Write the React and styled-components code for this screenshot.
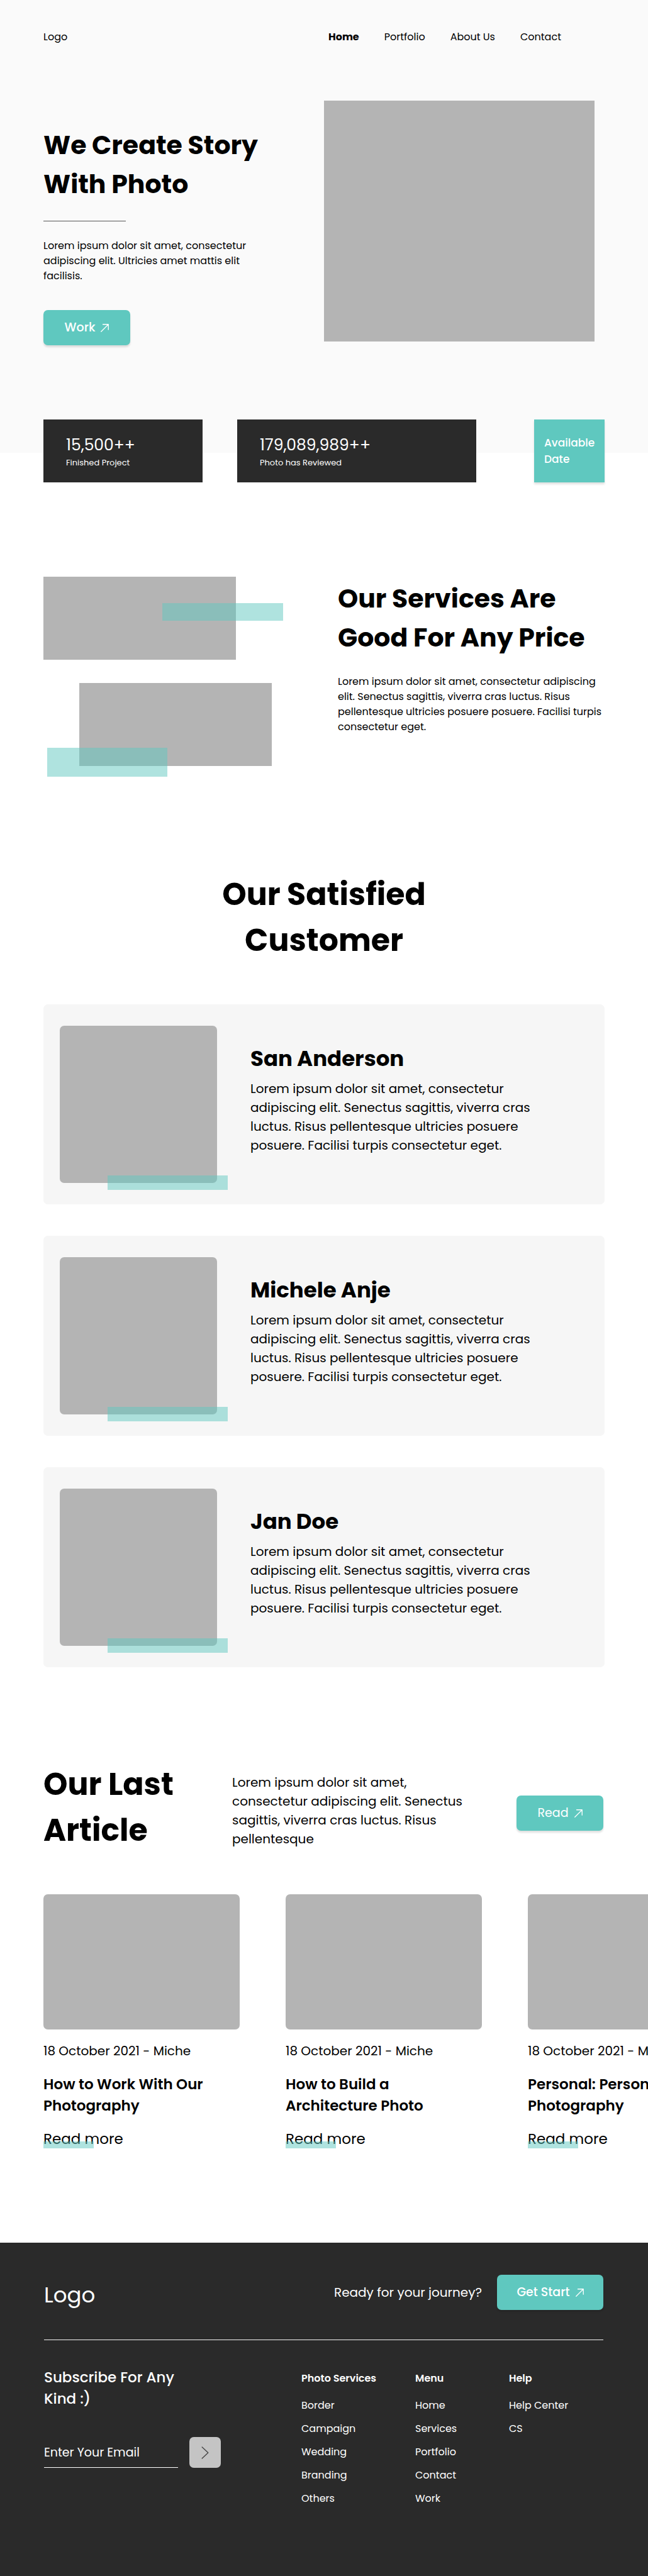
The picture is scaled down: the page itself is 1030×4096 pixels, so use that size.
import React from "react";
import styled, { createGlobalStyle } from "styled-components";

const teal = "#5fc8bf";
const tealVeil = "rgba(95, 200, 191, 0.5)";
const ink = "#2a2a2a";
const placeholder = "#b4b4b4";

const GlobalStyle = createGlobalStyle`
  *, *::before, *::after { box-sizing: border-box; }
  body {
    margin: 0;
    background: #fff;
    color: #000;
    font-family: Poppins, Inter, "Open Sans", sans-serif;
    font-size: 16px;
    line-height: 24px;
  }
  h1, h2, h3, p, ul, figure { margin: 0; padding: 0; }
  ul { list-style: none; }
  a { color: inherit; text-decoration: none; }
  button, input { font: inherit; color: inherit; }
`;

/* Shared pieces */

const Section = styled.section`
  padding: 0 69px;
  margin-top: ${(p) => p.$gap}px;
`;

const Title = styled.h2`
  font-size: 41px;
  line-height: 62px;
  font-weight: 700;
`;

const BigTitle = styled.h2`
  font-size: 49px;
  line-height: 73px;
  font-weight: 700;
  text-align: ${(p) => (p.$center ? "center" : "left")};
`;

const Copy = styled.p`
  max-width: ${(p) => (p.$width ? `${p.$width}px` : "none")};
  font-size: ${(p) => (p.$large ? 20 : 16)}px;
  line-height: ${(p) => (p.$large ? 30 : 24)}px;
`;

const Action = styled.button`
  display: inline-flex;
  align-items: center;
  justify-content: center;
  gap: 9px;
  min-width: ${(p) => (p.$wide ? 169 : 138)}px;
  height: 56px;
  padding: 0 30px;
  border: 0;
  border-radius: 7px;
  background: ${teal};
  box-shadow: 0 3px 3px rgba(0, 0, 0, 0.12);
  color: #fff;
  font-size: 19px;
  font-weight: ${(p) => p.$weight || 500};
  white-space: nowrap;
  cursor: pointer;
`;

const Veil = styled.span`
  position: absolute;
  background: ${tealVeil};
`;

function ArrowIcon() {
  return (
    <svg width="13" height="13" viewBox="0 0 17 17" fill="none" stroke="#fff" strokeWidth="1.7" strokeLinecap="round" strokeLinejoin="round" aria-hidden="true">
      <path d="M1 16L16 1M4.6 1H16V12" />
    </svg>
  );
}

/* Header and hero */

const Top = styled.div`
  padding: 47px 69px 171px;
  background: #fafafa;
`;

const Header = styled.header`
  display: grid;
  grid-template-columns: 1fr 1fr;
`;

const Nav = styled.nav`
  display: flex;
  gap: 40px;
  padding-left: 7px;
`;

const NavLink = styled.a`
  font-weight: ${(p) => (p.$active ? 700 : 400)};
`;

const Hero = styled.section`
  display: grid;
  grid-template-columns: 1fr 1fr;
  margin-top: 89px;
`;

const HeroText = styled.div`
  padding-top: 40px;
`;

const Rule = styled.hr`
  width: 131px;
  height: 1px;
  margin: 27px 0;
  border: 0;
  background: #555;
`;

const HeroAction = styled.div`
  margin-top: 42px;
`;

const HeroImage = styled.figure`
  width: 100%;
  max-width: 430px;
  height: 383px;
  background: ${placeholder};
`;

/* Figures strip */

const Stats = styled.section`
  display: grid;
  grid-template-columns: 253fr 380fr 149fr;
  gap: 55px;
  margin-top: -53px;
  padding: 0 69px;
`;

const Stat = styled.div`
  display: flex;
  flex-direction: column;
  height: 100px;
  padding: 23px 0 0 36px;
  background: ${ink};
  color: #fff;
`;

const StatValue = styled.strong`
  font-size: 25px;
  line-height: 36px;
  font-weight: 400;
`;

const StatLabel = styled.span`
  font-size: 13px;
  line-height: 20px;
`;

const Available = styled.button`
  justify-self: end;
  width: 112px;
  height: 100px;
  padding: 0 16px;
  border: 0;
  background: ${teal};
  box-shadow: 0 3px 3px rgba(0, 0, 0, 0.12);
  color: #fff;
  font-size: 17px;
  line-height: 26px;
  font-weight: 500;
  text-align: left;
  cursor: pointer;
`;

/* Services */

const ServicesGrid = styled.div`
  display: grid;
  grid-template-columns: 381fr 424fr;
  gap: 87px;
`;

const Frames = styled.div`
  display: flex;
  flex-direction: column;
  gap: 37px;
`;

const Frame = styled.div`
  position: relative;
  width: 306px;
  height: 132px;
  margin-left: ${(p) => (p.$indent ? 57 : 0)}px;
  background: ${placeholder};
`;

const SideVeil = styled(Veil)`
  top: 42px;
  left: 189px;
  width: 192px;
  height: 28px;
`;

const CornerVeil = styled(Veil)`
  top: 103px;
  left: -51px;
  width: 191px;
  height: 46px;
`;

const ServicesText = styled.div`
  display: flex;
  flex-direction: column;
  gap: 27px;
  padding-top: 4px;
`;

/* Testimonials */

const Cards = styled.div`
  display: flex;
  flex-direction: column;
  gap: 50px;
  margin-top: 65px;
`;

const Card = styled.article`
  display: flex;
  gap: 53px;
  padding: 34px 26px;
  border-radius: 7px;
  background: #f6f6f6;
`;

const Portrait = styled.div`
  position: relative;
  flex: none;
  width: 250px;
  height: 250px;
  border-radius: 7px;
  background: ${placeholder};
`;

const PortraitVeil = styled(Veil)`
  top: 238px;
  left: 76px;
  width: 191px;
  height: 23px;
`;

const CardText = styled.div`
  display: flex;
  flex-direction: column;
  gap: 8px;
  padding-top: 27px;
`;

const Name = styled.h3`
  font-size: 34px;
  line-height: 50px;
  font-weight: 700;
`;

/* Articles */

const ArticlesHead = styled.div`
  display: grid;
  grid-template-columns: 300fr 452fr 140fr;
`;

const ArticlesIntro = styled.div`
  padding-top: 18px;
`;

const ArticlesAction = styled.div`
  padding-top: 54px;
`;

const ArticleRow = styled.div`
  display: flex;
  gap: 73px;
  margin: 65px -69px 0 0;
  overflow-x: auto;
  scrollbar-width: none;
`;

const Article = styled.article`
  flex: none;
  width: 312px;
`;

const ArticleImage = styled.div`
  height: 215px;
  border-radius: 7px;
  background: ${placeholder};
`;

const ArticleDate = styled.p`
  margin-top: 19px;
  font-size: 20px;
  line-height: 30px;
  white-space: nowrap;
`;

const ArticleTitle = styled.h3`
  max-width: 270px;
  margin-top: 21px;
  font-size: 23px;
  line-height: 34px;
  font-weight: 600;
`;

const ReadMore = styled.a`
  position: relative;
  display: block;
  width: fit-content;
  margin-top: 18px;
  font-size: 23px;
  line-height: 36px;
`;

const ReadVeil = styled(Veil)`
  bottom: 3px;
  left: 0;
  width: 80px;
  height: 11px;
`;

/* Footer */

const Footer = styled.footer`
  margin-top: 147px;
  padding: 51px 71px 105px 70px;
  background: ${ink};
  color: #fff;
`;

const FooterTop = styled.div`
  display: flex;
  align-items: center;
  gap: 24px;
  padding-bottom: 47px;
  border-bottom: 1px solid #f2f2f2;
`;

const FooterLogo = styled.a`
  align-self: flex-end;
  margin-right: auto;
  font-size: 34px;
  line-height: 48px;
`;

const FooterMain = styled.div`
  display: grid;
  grid-template-columns: 409fr 181fr 149fr 150fr;
`;

const Subscribe = styled.form`
  padding-top: 42px;
`;

const SubscribeTitle = styled.h2`
  max-width: 230px;
  font-size: 23px;
  line-height: 34px;
  font-weight: 500;
`;

const Field = styled.div`
  display: flex;
  gap: 18px;
  margin-top: 44px;
`;

const Email = styled.input`
  width: 213px;
  height: 49px;
  padding: 0;
  border: 0;
  border-bottom: 1px solid #fff;
  border-radius: 0;
  outline: 0;
  background: transparent;
  font-size: 19px;

  &::placeholder { color: #fff; opacity: 1; }
`;

const Send = styled.button`
  display: grid;
  place-items: center;
  width: 50px;
  height: 49px;
  padding: 0;
  border: 0;
  border-radius: 7px;
  background: #c4c4c4;
  cursor: pointer;
`;

const LinkColumn = styled.div`
  padding-top: 49px;
`;

const ColumnTitle = styled.h3`
  margin-bottom: 12px;
  font-size: 16px;
  line-height: 24px;
  font-weight: 600;
`;

const LinkItem = styled.li`
  font-size: 16px;
  line-height: 37px;
`;

const nav = ["Home", "Portfolio", "About Us", "Contact"];
const customers = ["San Anderson", "Michele Anje", "Jan Doe"];
const articles = [
  ["How to Work With Our", "Photography"],
  ["How to Build a", "Architecture Photo"],
  ["Personal: Personal", "Photography"],
];
const columns = [
  ["Photo Services", ["Border", "Campaign", "Wedding", "Branding", "Others"]],
  ["Menu", ["Home", "Services", "Portfolio", "Contact", "Work"]],
  ["Help", ["Help Center", "CS"]],
];

export default function App() {
  return (
    <>
      <GlobalStyle />
      <Top>
        <Header>
          <a href="#home">Logo</a>
          <Nav>
            {nav.map((item, i) => (
              <NavLink key={item} href="#home" $active={i === 0}>{item}</NavLink>
            ))}
          </Nav>
        </Header>
        <Hero>
          <HeroText>
            <Title as="h1">We Create Story<br />With Photo</Title>
            <Rule />
            <Copy $width={340}>
              Lorem ipsum dolor sit amet, consectetur adipiscing elit. Ultricies amet mattis elit facilisis.
            </Copy>
            <HeroAction>
              <Action type="button">Work <ArrowIcon /></Action>
            </HeroAction>
          </HeroText>
          <HeroImage />
        </Hero>
      </Top>

      <Stats>
        <Stat>
          <StatValue>15,500++</StatValue>
          <StatLabel>Finished Project</StatLabel>
        </Stat>
        <Stat>
          <StatValue>179,089,989++</StatValue>
          <StatLabel>Photo has Reviewed</StatLabel>
        </Stat>
        <Available type="button">Available Date</Available>
      </Stats>

      <Section $gap={150}>
        <ServicesGrid>
          <Frames>
            <Frame><SideVeil /></Frame>
            <Frame $indent><CornerVeil /></Frame>
          </Frames>
          <ServicesText>
            <Title>Our Services Are<br />Good For Any Price</Title>
            <Copy>
              Lorem ipsum dolor sit amet, consectetur adipiscing elit. Senectus sagittis, viverra cras luctus. Risus pellentesque ultricies posuere posuere. Facilisi turpis consectetur eget.
            </Copy>
          </ServicesText>
        </ServicesGrid>
      </Section>

      <Section $gap={168}>
        <BigTitle $center>Our Satisfied<br />Customer</BigTitle>
        <Cards>
          {customers.map((name) => (
            <Card key={name}>
              <Portrait><PortraitVeil /></Portrait>
              <CardText>
                <Name>{name}</Name>
                <Copy $large $width={460}>
                  Lorem ipsum dolor sit amet, consectetur adipiscing elit. Senectus sagittis, viverra cras luctus. Risus pellentesque ultricies posuere posuere. Facilisi turpis consectetur eget.
                </Copy>
              </CardText>
            </Card>
          ))}
        </Cards>
      </Section>

      <Section $gap={150}>
        <ArticlesHead>
          <BigTitle>Our Last<br />Article</BigTitle>
          <ArticlesIntro>
            <Copy $large $width={380}>
              Lorem ipsum dolor sit amet, consectetur adipiscing elit. Senectus sagittis, viverra cras luctus. Risus pellentesque
            </Copy>
          </ArticlesIntro>
          <ArticlesAction>
            <Action type="button" $weight={400}>Read <ArrowIcon /></Action>
          </ArticlesAction>
        </ArticlesHead>
        <ArticleRow>
          {articles.map(([first, second]) => (
            <Article key={first}>
              <ArticleImage />
              <ArticleDate>18 October 2021 - Miche</ArticleDate>
              <ArticleTitle>{first}<br />{second}</ArticleTitle>
              <ReadMore href="#article">Read more<ReadVeil /></ReadMore>
            </Article>
          ))}
        </ArticleRow>
      </Section>

      <Footer>
        <FooterTop>
          <FooterLogo href="#home">Logo</FooterLogo>
          <Copy $large>Ready for your journey?</Copy>
          <Action type="button" $wide>Get Start <ArrowIcon /></Action>
        </FooterTop>
        <FooterMain>
          <Subscribe onSubmit={(e) => e.preventDefault()}>
            <SubscribeTitle>Subscribe For Any Kind :)</SubscribeTitle>
            <Field>
              <Email type="email" placeholder="Enter Your Email" aria-label="Enter Your Email" />
              <Send type="submit" aria-label="Subscribe">
                <svg width="12" height="20" viewBox="0 0 12 20" fill="none" stroke="#444" strokeWidth="1.4" strokeLinecap="round" strokeLinejoin="round" aria-hidden="true">
                  <path d="M1.2 1L10.8 10L1.2 19" />
                </svg>
              </Send>
            </Field>
          </Subscribe>
          {columns.map(([title, links]) => (
            <LinkColumn key={title}>
              <ColumnTitle>{title}</ColumnTitle>
              <ul>
                {links.map((link) => (
                  <LinkItem key={link}><a href="#footer">{link}</a></LinkItem>
                ))}
              </ul>
            </LinkColumn>
          ))}
        </FooterMain>
      </Footer>
    </>
  );
}
